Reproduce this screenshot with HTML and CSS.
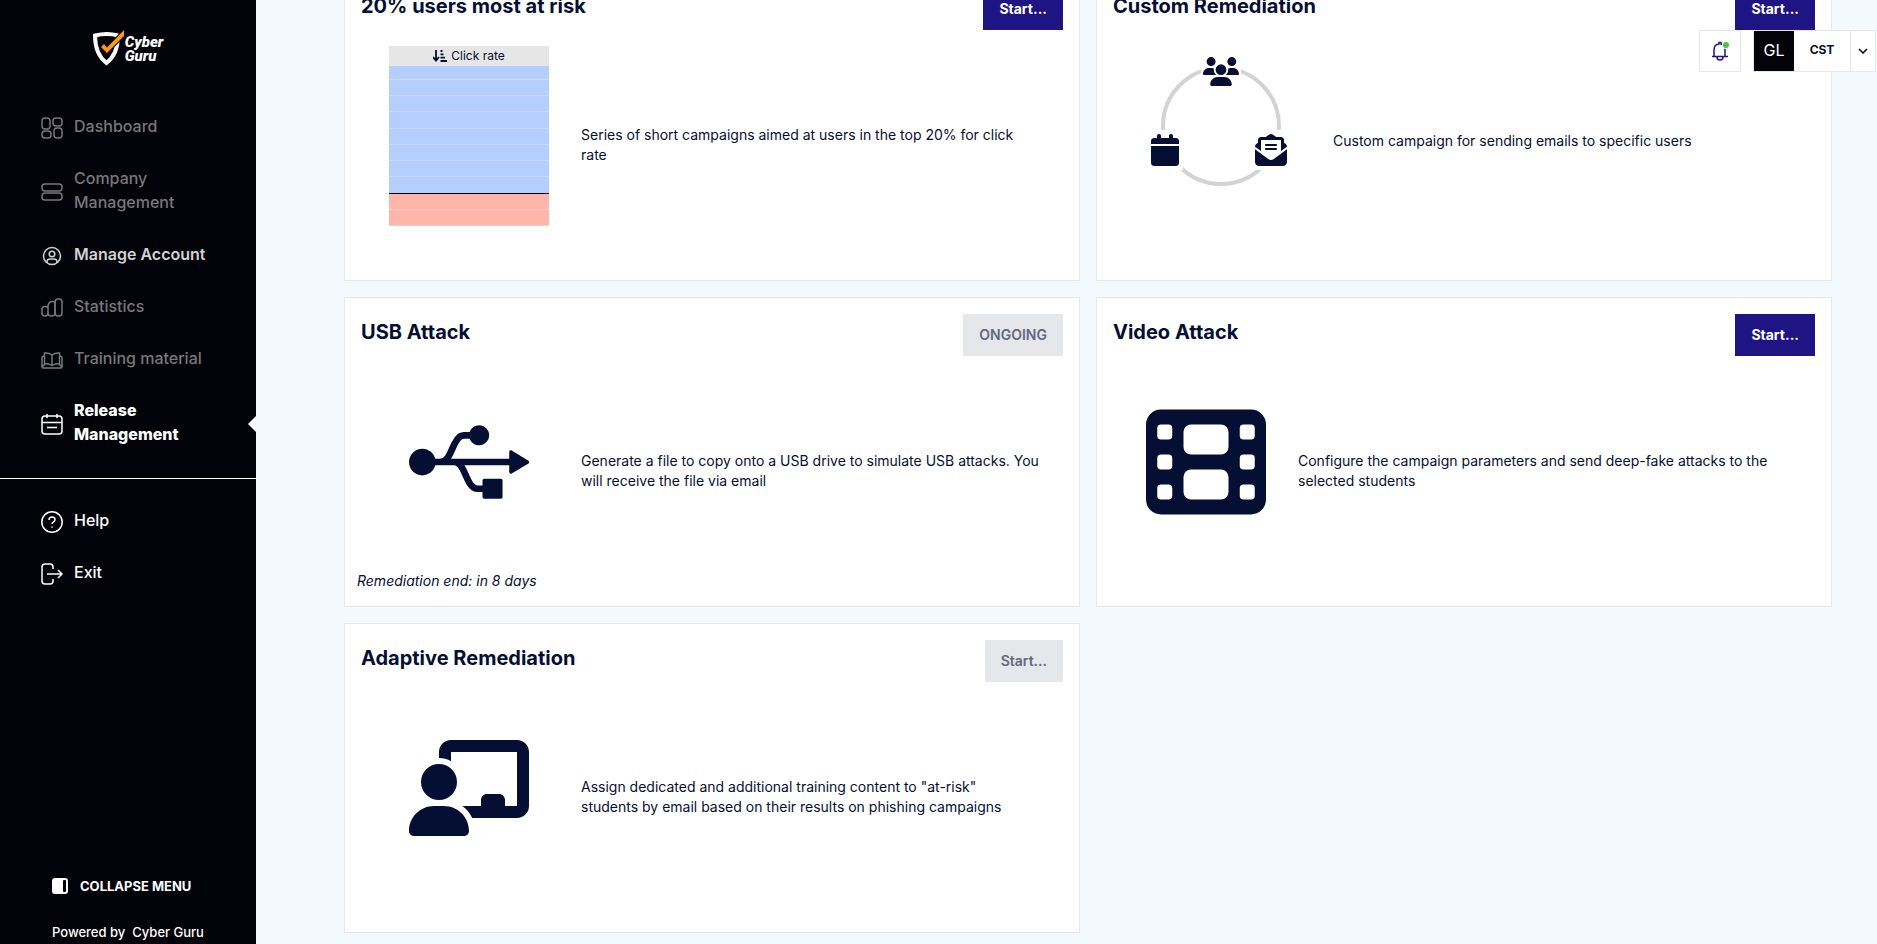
FILE: index.html
```
<!DOCTYPE html>
<html lang="en">
<head>
  <meta charset="UTF-8">
  <meta name="viewport" content="width=device-width, initial-scale=1">
  <title>Cyber Guru - Release Management</title>
  <link rel="stylesheet" href="styles.css">
</head>
<body>

  <aside class="sidebar">
    <a class="logo" href="#" aria-label="Cyber Guru">
      <svg width="32" height="36" viewBox="0 0 32 36">
        <path d="M2 5.500 Q14 2.500 25 5.500 Q25 24 13.500 33 Q2 24 2 5.500z" fill="none" stroke="#fff" stroke-width="4"/>
        <path d="M8 17l3-3 3 3.500L31 0v6L14 23z" fill="#ff9715" stroke="#020308" stroke-width="2" paint-order="stroke"/>
      </svg>
      <span class="logo-text">Cyber<br>Guru</span>
    </a>

    <nav class="menu">
      <a class="menu-item off" href="#">
        <svg class="menu-icon" viewBox="0 0 22 22"><rect x="1" y="1" width="8" height="11" rx="3"/><rect x="12" y="1" width="9" height="8" rx="3"/><rect x="1" y="14" width="9" height="7" rx="3"/><rect x="13" y="11" width="8" height="10" rx="3"/></svg>
        <span>Dashboard</span>
      </a>
      <a class="menu-item off" href="#">
        <svg class="menu-icon" viewBox="0 0 22 22"><rect x="1" y="3" width="20" height="7" rx="3"/><rect x="1" y="12" width="20" height="7" rx="3"/></svg>
        <span>Company<br>Management</span>
      </a>
      <a class="menu-item soft" href="#">
        <svg class="menu-icon" viewBox="0 0 22 22"><circle cx="11" cy="11" r="8.500"/><circle cx="11" cy="9" r="2.800"/><path d="M6 18v-1q0-3 3-3h4q3 0 3 3v1"/></svg>
        <span>Manage Account</span>
      </a>
      <a class="menu-item off" href="#">
        <svg class="menu-icon" viewBox="0 0 22 22"><path d="M7 10.500q-1-1-3-1-3 0-3 3V16q0 3 3 3t3-3zM14 5q-1-.5-2.500-.5-3.500 0-4.500 4V16q0 3 3.500 3 3.500 0 3.500-3z"/><rect x="14" y="2" width="7" height="17" rx="3"/></svg>
        <span>Statistics</span>
      </a>
      <a class="menu-item off" href="#">
        <svg class="menu-icon" viewBox="0 0 22 22"><path d="M11 6Q8 3.500 3.500 4v10.500q4.500 0 7.500 2 3-2 7.500-2V4Q14 3.500 11 6zv10M3.500 7Q1 7 1 9v9q0 1 1 1h18q1 0 1-1V9q0-2-2.500-2M1 18l3-3M21 18l-3-3"/></svg>
        <span>Training material</span>
      </a>
      <a class="menu-item current" href="#">
        <svg class="menu-icon" viewBox="0 0 22 22"><rect x="1" y="3" width="20" height="18" rx="3"/><path d="M1 9.500h20M6 1v4M16 1v4M6 14.500h10"/></svg>
        <span>Release<br>Management</span>
      </a>
    </nav>

    <nav class="menu menu-secondary">
      <a class="menu-item" href="#">
        <svg class="menu-icon" viewBox="0 0 22 22"><circle cx="11" cy="11" r="10.200"/><path d="M8 9q0-3 3-3t3 2.500q0 1.500-1.500 2.300T11 13M11 15.500v1.200"/></svg>
        <span>Help</span>
      </a>
      <a class="menu-item" href="#">
        <svg class="menu-icon" viewBox="0 0 22 22"><path d="M12 6V4q0-3-3-3H4Q1 1 1 4v14q0 3 3 3h5q3 0 3-3v-2M6 11h15M17 7l4 4-4 4"/></svg>
        <span>Exit</span>
      </a>
    </nav>

    <div class="sidebar-foot">
      <button class="collapse" type="button">
        <svg width="16" height="16" viewBox="0 0 16 16"><rect width="16" height="16" rx="3" fill="#fff"/><rect x="11" y="2" width="3" height="12" rx="1" fill="#020308"/></svg>
        COLLAPSE MENU
      </button>
      <div class="powered"><span>Powered by</span><span>Cyber Guru</span></div>
    </div>
  </aside>

  <div class="topbar">
    <button class="bell" type="button" aria-label="Notifications">
      <svg width="20" height="20" viewBox="0 0 20 20">
        <path d="M2 15.500h16M4 15V9q0-5.500 5-6V1.500h2V3q4 1 4 6v6M7 16q0 3 3 3t3-3" fill="none" stroke="#1f1484" stroke-width="1.500"/>
        <circle cx="16" cy="4" r="4" fill="#fff"/><circle cx="16" cy="4" r="3" fill="#55bd47"/>
      </svg>
    </button>
    <div class="account">
      <span class="initials">GL</span>
      <span class="company">CST</span>
      <button class="account-toggle" type="button" aria-label="Account menu">
        <svg width="10" height="6" viewBox="0 0 10 6"><path d="M1 1l4 4 4-4" fill="none" stroke="#050f34" stroke-width="1.600"/></svg>
      </button>
    </div>
  </div>

  <main class="content">
    <section class="card">
      <header class="card-head">
        <h2>20% users most at risk</h2>
        <button class="btn" type="button">Start...</button>
      </header>
      <div class="card-body">
        <div class="figure">
          <div class="rate-head">
            <svg width="14" height="12" viewBox="0 0 14 12"><path d="M3 0v10M0 7l3 3.500L6 7M7.500 1h2M7.500 4.300h3M7.500 7.600h4.500M7.500 11H14" fill="none" stroke="#050f34" stroke-width="1.800"/></svg>
            Click rate
          </div>
          <div class="rate-rows">
            <i></i><i></i><i></i><i></i><i></i><i></i><i></i><i class="limit"></i><i class="risk"></i><i class="risk"></i>
          </div>
        </div>
        <p>Series of short campaigns aimed at users in the top 20% for click<br>rate</p>
      </div>
    </section>

    <section class="card">
      <header class="card-head">
        <h2>Custom Remediation</h2>
        <button class="btn" type="button">Start...</button>
      </header>
      <div class="card-body">
        <svg class="cycle" viewBox="0 0 160 172">
          <circle cx="80" cy="80" r="58" fill="none" stroke="#d3d3d3" stroke-width="4"/>
          <path d="M60 7h40v37H60zM6 84h36v40H6zM110 84h40v40h-40z" fill="#fff"/>
          <svg x="62" y="11" width="36" height="29" viewBox="0 0 640 512"><path d="M144 0a80 80 0 1 1 0 160A80 80 0 1 1 144 0zM512 0a80 80 0 1 1 0 160A80 80 0 1 1 512 0zM0 298.700C0 239.800 47.800 192 106.700 192h42.700c15.900 0 31 3.500 44.600 9.700c-1.300 7.200-1.900 14.700-1.900 22.300c0 38.200 16.800 72.500 43.300 96c-.2 0-.4 0-.7 0H21.300C9.600 320 0 310.400 0 298.700zM405.300 320c-.2 0-.4 0-.7 0c26.600-23.500 43.300-57.800 43.300-96c0-7.600-.7-15-1.900-22.300c13.600-6.300 28.700-9.700 44.600-9.700h42.700C592.200 192 640 239.800 640 298.700c0 11.800-9.600 21.300-21.300 21.300H405.300zM224 224a96 96 0 1 1 192 0 96 96 0 1 1 -192 0zM128 485.300C128 411.700 187.700 352 261.300 352H378.700C452.300 352 512 411.700 512 485.300c0 14.700-11.900 26.700-26.700 26.700H154.700c-14.700 0-26.700-11.900-26.700-26.700z"/></svg>
          <svg x="10" y="88" width="28" height="32" viewBox="0 0 448 512"><path d="M96 32V64H48C21.500 64 0 85.500 0 112v48H448V112c0-26.500-21.500-48-48-48H352V32c0-17.700-14.300-32-32-32s-32 14.300-32 32V64H160V32c0-17.700-14.300-32-32-32S96 14.300 96 32zM448 192H0V464c0 26.500 21.500 48 48 48H400c26.500 0 48-21.500 48-48V192z"/></svg>
          <svg x="114" y="88" width="32" height="32" viewBox="0 0 512 512"><path d="M215.400 96H144 107.800 96v8.800V144v40.400 89L.2 202.500c1.600-18.100 10.900-34.900 25.700-45.800L48 140.300V96c0-26.500 21.500-48 48-48h76.600l49.900-36.900C232.200 3.900 243.900 0 256 0s23.800 3.900 33.500 11L339.400 48H416c26.500 0 48 21.500 48 48v44.300l22.100 16.400c14.800 10.900 24.100 27.700 25.700 45.800L416 273.400v-89V144 104.800 96H404.200 368 296.600 215.400zM0 448V242.100L217.600 403.300c11.100 8.200 24.600 12.700 38.400 12.700s27.300-4.400 38.400-12.700L512 242.100V448v0c0 35.300-28.700 64-64 64H64c-35.300 0-64-28.700-64-64v0zM176 160H336c8.800 0 16 7.200 16 16s-7.200 16-16 16H176c-8.800 0-16-7.200-16-16s7.200-16 16-16zm0 64H336c8.800 0 16 7.200 16 16s-7.200 16-16 16H176c-8.800 0-16-7.200-16-16s7.200-16 16-16z"/></svg>
        </svg>
        <p>Custom campaign for sending emails to specific users</p>
      </div>
    </section>

    <section class="card">
      <header class="card-head">
        <h2>USB Attack</h2>
        <button class="btn" type="button" disabled>ONGOING</button>
      </header>
      <div class="card-body">
        <div class="figure icon">
          <svg width="120" height="96" viewBox="0 0 640 512"><path d="M641.500 256c0 3.100-1.700 6.100-4.500 7.500L547.900 317c-1.400.8-2.800 1.400-4.500 1.400-1.400 0-3.100-.3-4.500-1.100-2.800-1.700-4.500-4.500-4.500-7.800v-35.600H295.700c25.300 39.600 40.500 106.900 69.600 106.900H392V354c0-5 3.900-8.900 8.900-8.900H490c5 0 8.900 3.900 8.900 8.900v89.100c0 5-3.900 8.900-8.900 8.900h-89.100c-5 0-8.900-3.900-8.900-8.900v-26.700h-26.700c-75.400 0-81.100-142.500-124.700-142.500H140.300c-8.100 30.600-35.900 53.500-69 53.500C32 327.300 0 295.300 0 256s32-71.300 71.300-71.300c33.100 0 61 22.800 69 53.500 39.100 0 43.900 9.500 74.600-60.400C255 88.700 273 95.700 323.800 95.700c7.500-20.900 27-35.600 50.400-35.600 29.500 0 53.500 23.900 53.500 53.500s-23.900 53.500-53.500 53.500c-23.400 0-42.900-14.800-50.400-35.600H294c-29.100 0-44.300 67.400-69.600 106.900h310.100v-35.600c0-3.300 1.700-6.100 4.500-7.800 2.800-1.700 6.400-1.400 8.900.3l89.100 53.500c2.800 1.100 4.500 4.100 4.500 7.200z"/></svg>
        </div>
        <p>Generate a file to copy onto a USB drive to simulate USB attacks. You<br>will receive the file via email</p>
      </div>
      <footer class="card-note">Remediation end: in 8 days</footer>
    </section>

    <section class="card">
      <header class="card-head">
        <h2>Video Attack</h2>
        <button class="btn" type="button">Start...</button>
      </header>
      <div class="card-body">
        <div class="figure icon narrow">
          <svg width="120" height="120" viewBox="0 0 512 512">
            <rect y="32" width="512" height="448" rx="64"/>
            <g fill="#fff">
              <rect x="48" y="96" width="64" height="64" rx="16"/><rect x="48" y="224" width="64" height="64" rx="16"/><rect x="48" y="352" width="64" height="64" rx="16"/>
              <rect x="400" y="96" width="64" height="64" rx="16"/><rect x="400" y="224" width="64" height="64" rx="16"/><rect x="400" y="352" width="64" height="64" rx="16"/>
              <rect x="160" y="96" width="192" height="128" rx="32"/><rect x="160" y="288" width="192" height="128" rx="32"/>
            </g>
          </svg>
        </div>
        <p>Configure the campaign parameters and send deep-fake attacks to the<br>selected students</p>
      </div>
    </section>

    <section class="card">
      <header class="card-head">
        <h2>Adaptive Remediation</h2>
        <button class="btn" type="button" disabled>Start...</button>
      </header>
      <div class="card-body">
        <div class="figure icon">
          <svg width="120" height="96" viewBox="0 0 640 512"><path d="M160 64c0-35.300 28.700-64 64-64H576c35.300 0 64 28.700 64 64V352c0 35.300-28.700 64-64 64H336.800c-11.800-25.500-29.900-47.500-52.400-64H384V320c0-17.700 14.300-32 32-32h64c17.700 0 32 14.300 32 32v32h64V64L224 64v49.100C205.200 102.200 183.300 96 160 96V64zm0 64a96 96 0 1 1 0 192 96 96 0 1 1 0-192zM133.300 352h53.300C260.300 352 320 411.700 320 485.300c0 14.700-11.900 26.700-26.700 26.700H26.700C11.900 512 0 500.100 0 485.300C0 411.700 59.700 352 133.300 352z"/></svg>
        </div>
        <p>Assign dedicated and additional training content to "at-risk"<br>students by email based on their results on phishing campaigns</p>
      </div>
    </section>
  </main>

</body>
</html>
```
FILE: styles.css
```
* {
  box-sizing: border-box;
}

body {
  margin: 0;
  min-height: 100vh;
  overflow: hidden;
  background-color: #f4f9ff;
  color: #050f34;
  font-family: Inter, "Liberation Sans", sans-serif;
  font-size: 14px;
  line-height: 20px;
}

button {
  font: inherit;
  cursor: pointer;
}

svg {
  fill: #050f34;
  flex-shrink: 0;
}

/* sidebar */
.sidebar {
  position: fixed;
  top: 0;
  bottom: 0;
  left: 0;
  width: 256px;
  display: flex;
  flex-direction: column;
  padding-top: 30px;
  background-color: #020308;
  color: #fff;
}

.logo {
  display: flex;
  justify-content: center;
  height: 70px;
  color: #fff;
  text-decoration: none;
}

.logo-text {
  font-family: Roboto, "Liberation Sans", sans-serif;
  font-size: 15px;
  font-weight: 900;
  font-style: italic;
  line-height: 14px;
  padding-top: 5px;
}

.menu-item {
  position: relative;
  display: flex;
  align-items: center;
  gap: 11px;
  padding: 14px 16px 14px 41px;
  color: #fff;
  font-size: 16px;
  font-weight: 500;
  line-height: 24px;
  text-decoration: none;
}

.menu-icon {
  width: 22px;
  height: 22px;
  margin: 2px 0 -2px;
  fill: none;
  stroke: currentColor;
  stroke-width: 1.5;
}

.off {
  color: #77787b;
}

.soft {
  color: #d2d2d3;
  font-weight: 600;
}

.current {
  font-weight: 800;
}

.current::after {
  content: "";
  position: absolute;
  right: 0;
  top: 32px;
  border: 8px solid transparent;
  border-left: 0;
  border-right-color: #f4f9ff;
}

.menu-secondary {
  margin-top: 18px;
  padding-top: 15px;
  border-top: 1px solid #fff;
}

.sidebar-foot {
  margin-top: auto;
  padding: 0 16px 2px 52px;
  font-size: 13px;
}

.collapse {
  display: flex;
  align-items: center;
  gap: 12px;
  margin-bottom: 26px;
  padding: 0;
  border: 0;
  background: none;
  color: #fff;
  font-weight: 700;
}

.powered {
  display: flex;
  gap: 7px;
  font-weight: 500;
}

/* account bar */
.topbar {
  position: fixed;
  top: 30px;
  right: 1px;
  z-index: 10;
  display: flex;
  gap: 12px;
}

.bell {
  width: 42px;
  height: 42px;
  display: flex;
  align-items: center;
  justify-content: center;
  padding: 0;
  border: 1px solid #e5e7eb;
  background-color: #fff;
}

.account {
  display: flex;
  height: 42px;
  border: 1px solid #e5e7eb;
  background-color: #fff;
  line-height: 38px;
}

.initials {
  width: 40px;
  background-color: #020308;
  color: #fff;
  font-size: 16px;
  text-align: center;
}

.company {
  width: 56px;
  font-size: 12px;
  font-weight: 700;
  text-align: center;
}

.account-toggle {
  width: 25px;
  display: flex;
  align-items: center;
  justify-content: center;
  padding: 0;
  border: 0;
  border-left: 1px solid #e5e7eb;
  background: none;
}

/* campaign cards, page scrolled to its end */
.content {
  display: grid;
  grid-template-columns: 1fr 1fr;
  gap: 16px;
  margin: -29px 45px 11px 344px;
}

.card {
  position: relative;
  min-height: 310px;
  padding: 16px;
  border: 1px solid #e5e7eb;
  background-color: #fff;
}

.card-head {
  display: flex;
  justify-content: space-between;
  align-items: flex-start;
}

h2 {
  margin: 0;
  padding-top: 4px;
  font-size: 20px;
  font-weight: 700;
  line-height: 28px;
}

.btn {
  height: 42px;
  padding: 0 16px;
  border: 0;
  background-color: #1f1484;
  color: #fff;
  font-weight: 700;
}

.btn:disabled {
  background-color: #e5e7eb;
  color: #62677f;
  font-weight: 600;
  cursor: default;
}

.card-body {
  display: flex;
  align-items: center;
  gap: 32px;
  padding: 16px 8px 0 28px;
}

.card-body p {
  margin: 0;
  padding-top: 18px;
}

.figure {
  flex-shrink: 0;
  width: 160px;
  height: 180px;
}

.icon {
  display: flex;
  align-items: center;
  justify-content: center;
}

.narrow {
  width: 125px;
  justify-content: flex-end;
}

.cycle {
  width: 160px;
  height: 172px;
}

.rate-head {
  display: flex;
  align-items: center;
  justify-content: center;
  gap: 4px;
  height: 20px;
  background-color: #e6e6e6;
  font-size: 12px;
}

.rate-rows {
  display: grid;
  grid-template-rows: 14px repeat(9, 1fr);
  height: 160px;
}

.rate-rows i {
  border-bottom: 1px solid #d3d9e4;
  background-color: #b4cffe;
}

.rate-rows .limit {
  border-color: #000;
}

.rate-rows .risk {
  border-color: #f0cdc8;
  background-color: #ffb5aa;
}

.card-note {
  position: absolute;
  left: 12px;
  bottom: 15px;
  font-style: italic;
}
```
